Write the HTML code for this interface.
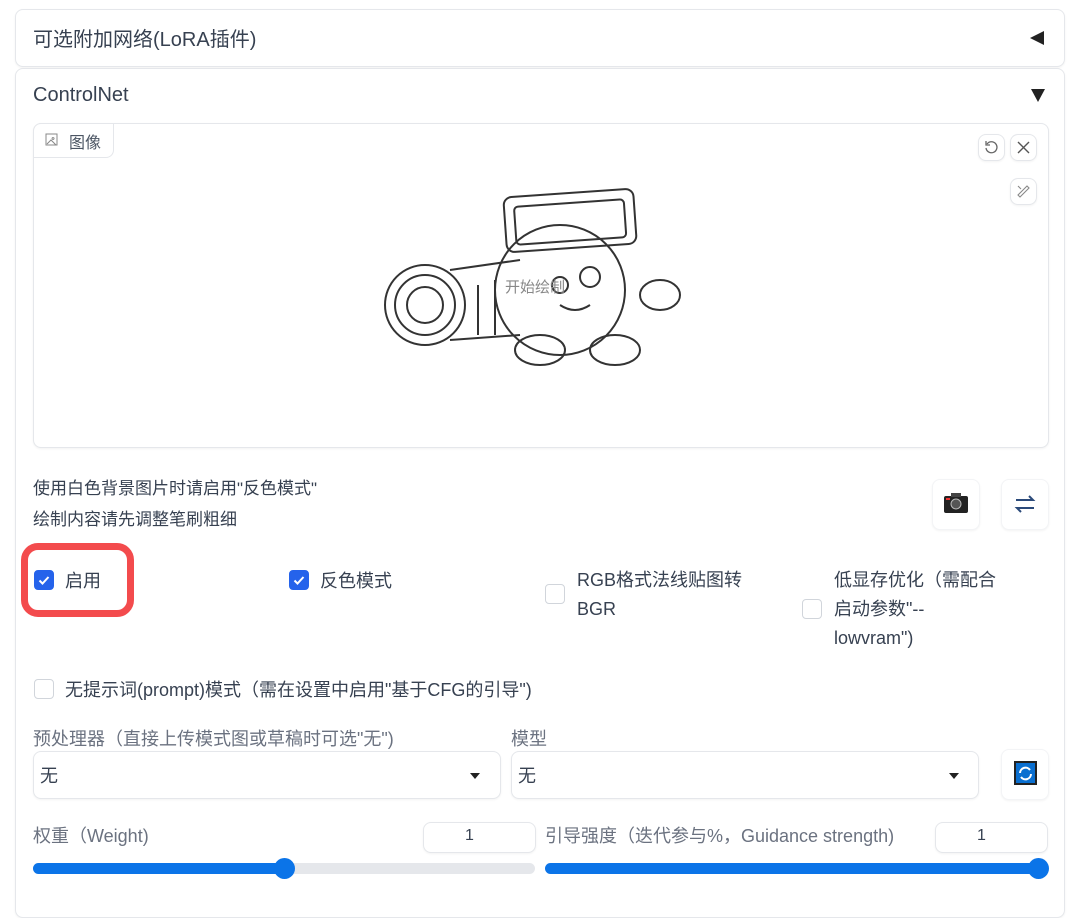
<!DOCTYPE html>
<html><head><meta charset="utf-8"><style>
*{box-sizing:border-box;margin:0;padding:0}
body{width:1080px;height:904px;background:#fff;position:relative;overflow:hidden;font-family:"Liberation Sans","Noto Sans CJK SC",sans-serif;color:#374151}
.a{position:absolute}
.panel{border:1px solid #e5e7eb;border-radius:8px;background:#fff;box-shadow:0 1px 2px rgba(0,0,0,.05)}
.t{font-size:18px;color:#374151;white-space:nowrap}
.lbl{font-size:18px;color:#6b7280;white-space:nowrap}
.cb{width:20px;height:20px;border-radius:4px;border:1px solid #d1d5db;background:#fff}
.cb.on{background:#2563eb;border-color:#2563eb}
.box{border:1px solid #e5e7eb;border-radius:8px;background:#fff;box-shadow:0 1px 2px rgba(0,0,0,.05)}
.tri{width:0;height:0;border-left:5px solid transparent;border-right:5px solid transparent;border-top:6px solid #222}
</style></head><body>
<div class="a panel" style="left:15px;top:9px;width:1050px;height:58px"></div>
<div class="a" style="left:33px;top:23px;font-size:20px;color:#374151">可选附加网络(LoRA插件)</div>
<div class="a" style="left:1030px;top:31px;width:0;height:0;border-top:7px solid transparent;border-bottom:7px solid transparent;border-right:14px solid #222"></div>

<div class="a panel" style="left:15px;top:68px;width:1050px;height:850px"></div>
<div class="a" style="left:33px;top:84px;font-size:20px;color:#374151">ControlNet</div>
<div class="a" style="left:1031px;top:89px;width:0;height:0;border-left:7px solid transparent;border-right:7px solid transparent;border-top:13px solid #222"></div>

<div class="a box" style="left:33px;top:123px;width:1016px;height:325px"></div>
<div class="a" style="left:33px;top:123px;width:81px;height:35px;border:1px solid #e5e7eb;border-radius:8px 0 8px 0;background:#fff"></div>
<svg class="a" style="left:45px;top:133px" width="13" height="13" viewBox="0 0 13 13"><rect x="1" y="1" width="11" height="11" fill="none" stroke="#888"/><path d="M2 11l4-4 5 5M8 4.5a1 1 0 1 0 .1 0" fill="none" stroke="#888"/></svg>
<div class="a" style="left:69px;top:129px;font-size:16px;color:#4b5563">图像</div>
<div class="a box" style="left:978px;top:134px;width:27px;height:27px"></div>
<div class="a box" style="left:1010px;top:134px;width:27px;height:27px"></div>
<div class="a box" style="left:1010px;top:178px;width:27px;height:27px"></div>
<svg class="a" style="left:983px;top:139px" width="17" height="17" viewBox="0 0 17 17"><path d="M4 5a5.5 5.5 0 1 1-1 4" fill="none" stroke="#666" stroke-width="1.3"/><path d="M3 2v4h4" fill="none" stroke="#666" stroke-width="1.3"/></svg>
<svg class="a" style="left:1015px;top:139px" width="17" height="17" viewBox="0 0 17 17"><path d="M3 3l11 11M14 3L3 14" stroke="#555" stroke-width="1.4"/></svg>
<svg class="a" style="left:1015px;top:183px" width="17" height="17" viewBox="0 0 17 17"><path d="M5 14l9-9-2-2-9 9zM3 3l3 3" fill="none" stroke="#888" stroke-width="1.1"/></svg>

<svg class="a" style="left:380px;top:185px" width="310" height="190" viewBox="0 0 310 190" fill="none" stroke="#333" stroke-width="2">
<circle cx="180" cy="105" r="65"/>
<rect x="125" y="8" width="130" height="55" rx="8" transform="rotate(-4 190 35)"/>
<rect x="135" y="18" width="110" height="38" rx="4" transform="rotate(-4 190 35)"/>
<circle cx="45" cy="120" r="40"/>
<circle cx="45" cy="120" r="30"/>
<circle cx="45" cy="120" r="18"/>
<path d="M70 85l70-10M70 155l70-5"/>
<path d="M98 100v50M115 95v55"/>
<ellipse cx="160" cy="165" rx="25" ry="15"/>
<ellipse cx="235" cy="165" rx="25" ry="15"/>
<circle cx="210" cy="92" r="10"/>
<circle cx="180" cy="100" r="8"/>
<path d="M180 120q15 10 30 0"/>
<ellipse cx="280" cy="110" rx="20" ry="15"/>
</svg>
<div class="a" style="left:505px;top:276px;font-size:15px;color:#888">开始绘制</div>

<div class="a t" style="left:33px;top:474px;font-size:17px">使用白色背景图片时请启用"反色模式"</div>
<div class="a t" style="left:33px;top:505px;font-size:17px">绘制内容请先调整笔刷粗细</div>
<div class="a box" style="left:932px;top:479px;width:48px;height:51px;border-color:#f3f4f6"></div>
<div class="a box" style="left:1001px;top:479px;width:48px;height:51px;border-color:#f3f4f6"></div>
<svg class="a" style="left:943px;top:492px" width="26" height="22" viewBox="0 0 26 22"><rect x="1" y="4" width="24" height="17" rx="2" fill="#222"/><rect x="8" y="1" width="10" height="4" fill="#444"/><circle cx="13" cy="12" r="5" fill="#555" stroke="#bbb"/><rect x="3" y="6" width="4" height="2" fill="#e33"/></svg>
<svg class="a" style="left:1014px;top:494px" width="22" height="20" viewBox="0 0 22 20"><path d="M2 6h17l-4-4M20 14H3l4 4" fill="none" stroke="#2b4a7a" stroke-width="2"/></svg>

<div class="a" style="left:21px;top:543px;width:113px;height:74px;border:7px solid #f34b4d;border-radius:17px"></div>
<div class="a cb on" style="left:34px;top:570px"></div>
<svg class="a" style="left:34px;top:570px" width="20" height="20"><path d="M5.5 10.5l3 3 6-6.5" fill="none" stroke="#fff" stroke-width="2"/></svg>
<div class="a t" style="left:65px;top:567px">启用</div>
<div class="a cb on" style="left:289px;top:570px"></div>
<svg class="a" style="left:289px;top:570px" width="20" height="20"><path d="M5.5 10.5l3 3 6-6.5" fill="none" stroke="#fff" stroke-width="2"/></svg>
<div class="a t" style="left:320px;top:567px">反色模式</div>
<div class="a cb" style="left:545px;top:584px"></div>
<div class="a t" style="left:577px;top:566px;line-height:29px">RGB格式法线贴图转<br>BGR</div>
<div class="a cb" style="left:802px;top:599px"></div>
<div class="a t" style="left:834px;top:566px;line-height:29px">低显存优化（需配合<br>启动参数"--<br>lowvram")</div>

<div class="a cb" style="left:34px;top:679px"></div>
<div class="a t" style="left:65px;top:676px">无提示词(prompt)模式（需在设置中启用"基于CFG的引导")</div>

<div class="a lbl" style="left:33px;top:725px">预处理器（直接上传模式图或草稿时可选"无")</div>
<div class="a lbl" style="left:511px;top:725px">模型</div>
<div class="a box" style="left:33px;top:751px;width:468px;height:48px"></div>
<div class="a t" style="left:40px;top:762px">无</div>
<div class="a tri" style="left:470px;top:773px"></div>
<div class="a box" style="left:511px;top:751px;width:468px;height:48px"></div>
<div class="a t" style="left:518px;top:762px">无</div>
<div class="a tri" style="left:949px;top:773px"></div>
<div class="a box" style="left:1001px;top:749px;width:48px;height:51px;border-color:#f3f4f6"></div>
<div class="a" style="left:1014px;top:761px;width:23px;height:24px;background:#0a6fd0;border:2px solid #222"></div>
<svg class="a" style="left:1016px;top:764px" width="19" height="19" viewBox="0 0 19 19"><path d="M4 9a5.5 5.5 0 0 1 10-3M15 10a5.5 5.5 0 0 1-10 3" fill="none" stroke="#fff" stroke-width="2"/></svg>

<div class="a lbl" style="left:33px;top:822px">权重（Weight)</div>
<div class="a box" style="left:423px;top:822px;width:113px;height:31px"></div>
<div class="a t" style="left:465px;top:827px;font-size:16px">1</div>
<div class="a" style="left:33px;top:863px;width:502px;height:11px;border-radius:6px;background:#e5e7eb"></div>
<div class="a" style="left:33px;top:863px;width:252px;height:11px;border-radius:6px;background:#0b74e8"></div>
<div class="a" style="left:274px;top:858px;width:21px;height:21px;border-radius:50%;background:#0b74e8"></div>

<div class="a lbl" style="left:545px;top:822px">引导强度（迭代参与%，Guidance strength)</div>
<div class="a box" style="left:935px;top:822px;width:113px;height:31px"></div>
<div class="a t" style="left:977px;top:827px;font-size:16px">1</div>
<div class="a" style="left:545px;top:863px;width:502px;height:11px;border-radius:6px;background:#0b74e8"></div>
<div class="a" style="left:1028px;top:858px;width:21px;height:21px;border-radius:50%;background:#0b74e8"></div>
</body></html>
